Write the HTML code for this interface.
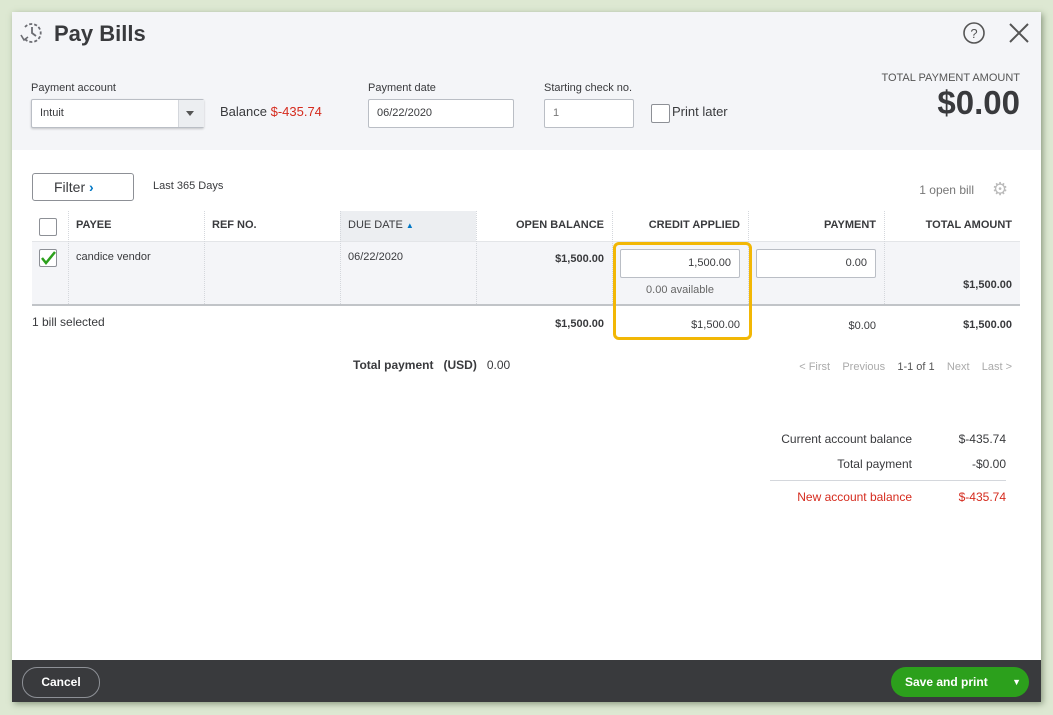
<!DOCTYPE html>
<html><head><style>
body{margin:0;width:1053px;height:715px;background:#dde8d2;font-family:"Liberation Sans",sans-serif;color:#393a3d;position:relative;overflow:hidden}
.a{position:absolute}
#dlg{left:12px;top:12px;width:1029px;height:690px;background:#fff;box-shadow:2px 2px 6px rgba(60,80,50,.5)}
#hdr{left:0;top:0;width:1029px;height:138px;background:#f4f5f8}
.lbl{font-size:11px;color:#393a3d}
.inp{background:#fff;border:1px solid #babec5;border-radius:2px;box-sizing:border-box;font-size:11px;padding:0 8px;line-height:26px;color:#393a3d}
.th{font-size:11px;font-weight:bold;color:#393a3d;top:207px}
.td{font-size:11px}
.r{text-align:right}
</style></head><body>
<div id="dlg" class="a">
<div id="hdr" class="a"></div>
<svg class="a" style="left:7px;top:9px" width="26" height="24" viewBox="0 0 26 24"><path d="M6 6 A9 9 0 1 1 6 18" fill="none" stroke="#6b6c72" stroke-width="1.8" stroke-dasharray="3 2"/><path d="M13 6v6l4 3" fill="none" stroke="#6b6c72" stroke-width="1.8"/><path d="M2 14 l3 5 l4 -3" fill="none" stroke="#6b6c72" stroke-width="1.6"/></svg>
<div class="a" style="left:42px;top:9px;font-size:22px;font-weight:bold;color:#393a3d">Pay Bills</div>
<svg class="a" style="left:950px;top:9px" width="24" height="24"><circle cx="12" cy="12" r="10" fill="none" stroke="#555" stroke-width="1.6"/><text x="12" y="17" text-anchor="middle" font-size="13" font-family="Liberation Sans" fill="#555">?</text></svg>
<svg class="a" style="left:996px;top:10px" width="22" height="22"><path d="M2 2L20 20M20 2L2 20" stroke="#555" stroke-width="2"/></svg>
<div class="a lbl" style="left:19px;top:70px">Payment account</div>
<div class="a inp" style="left:19px;top:87px;width:173px;height:29px;box-shadow:0 1px 2px rgba(0,0,0,.2)">Intuit</div>
<div class="a" style="left:166px;top:88px;width:25px;height:27px;background:#eceef1;border-left:1px solid #d4d7dc"></div>
<div class="a" style="left:174px;top:99px;width:0;height:0;border-left:4px solid transparent;border-right:4px solid transparent;border-top:5px solid #555"></div>
<div class="a" style="left:208px;top:92px;font-size:13px">Balance <span style="color:#d52b1e">$-435.74</span></div>
<div class="a lbl" style="left:356px;top:70px">Payment date</div>
<div class="a inp" style="left:356px;top:87px;width:146px;height:29px">06/22/2020</div>
<div class="a lbl" style="left:532px;top:70px">Starting check no.</div>
<div class="a inp" style="left:532px;top:87px;width:90px;height:29px;color:#777">1</div>
<div class="a" style="left:639px;top:92px;width:17px;height:17px;border:1px solid #8d9096;border-radius:2px;background:#fff"></div>
<div class="a" style="left:660px;top:92px;font-size:13px">Print later</div>
<div class="a" style="left:850px;top:60px;width:158px;font-size:11px;color:#555;text-align:right">TOTAL PAYMENT AMOUNT</div>
<div class="a" style="left:850px;top:72px;width:158px;font-size:33px;font-weight:bold;text-align:right">$0.00</div>

<div class="a" style="left:20px;top:161px;width:102px;height:28px;border:1px solid #8d9096;border-radius:3px;box-sizing:border-box;font-size:14px;line-height:26px;padding-left:21px">Filter <span style="color:#0077c5;font-weight:bold">&#x203A;</span></div>
<div class="a" style="left:141px;top:168px;font-size:11px">Last 365 Days</div>
<div class="a" style="left:880px;top:171px;width:82px;font-size:12px;color:#777;text-align:right">1 open bill</div>
<div class="a" style="left:980px;top:167px;font-size:18px;color:#bbb">&#x2699;</div>

<div class="a" style="left:328px;top:199px;width:136px;height:30px;background:#eceef1"></div>
<div class="a" style="left:20px;top:229px;width:988px;height:63px;background:#f4f5f8;border-top:1px solid #e3e5e8"></div>
<div class="a" style="left:20px;top:292px;width:988px;height:2px;background:#c1c4c8"></div>
<div class="a" style="left:56px;top:199px;width:1px;height:93px;border-left:1px dotted #d4d7dc"></div>
<div class="a" style="left:192px;top:199px;width:1px;height:93px;border-left:1px dotted #d4d7dc"></div>
<div class="a" style="left:328px;top:199px;width:1px;height:93px;border-left:1px dotted #d4d7dc"></div>
<div class="a" style="left:464px;top:199px;width:1px;height:93px;border-left:1px dotted #d4d7dc"></div>
<div class="a" style="left:600px;top:199px;width:1px;height:93px;border-left:1px dotted #d4d7dc"></div>
<div class="a" style="left:736px;top:199px;width:1px;height:93px;border-left:1px dotted #d4d7dc"></div>
<div class="a" style="left:872px;top:199px;width:1px;height:93px;border-left:1px dotted #d4d7dc"></div>
<div class="a" style="left:27px;top:206px;width:16px;height:16px;border:1px solid #8d9096;border-radius:2px;background:#fff"></div>
<div class="a th" style="left:64px">PAYEE</div>
<div class="a th" style="left:200px">REF NO.</div>
<div class="a th" style="left:336px;font-weight:normal">DUE DATE <span style="font-size:8px;color:#0077c5">&#9650;</span></div>
<div class="a th r" style="left:470px;width:122px">OPEN BALANCE</div>
<div class="a th r" style="left:606px;width:122px">CREDIT APPLIED</div>
<div class="a th r" style="left:742px;width:122px">PAYMENT</div>
<div class="a th r" style="left:878px;width:122px">TOTAL AMOUNT</div>
<div class="a" style="left:27px;top:237px;width:16px;height:16px;border:1px solid #8d9096;border-radius:2px;background:#fff"></div>
<svg class="a" style="left:28px;top:237px" width="18" height="18"><path d="M2 9l4 5 9-11" fill="none" stroke="#2ca01c" stroke-width="2.5"/></svg>
<div class="a td" style="left:64px;top:239px">candice vendor</div>
<div class="a td" style="left:336px;top:239px">06/22/2020</div>
<div class="a td r" style="left:470px;top:241px;width:122px;font-weight:bold">$1,500.00</div>
<div class="a inp r" style="left:608px;top:237px;width:120px;height:29px">1,500.00</div>
<div class="a td" style="left:608px;top:272px;width:120px;text-align:center;color:#666">0.00 available</div>
<div class="a inp r" style="left:744px;top:237px;width:120px;height:29px">0.00</div>
<div class="a td r" style="left:878px;top:267px;width:122px;font-weight:bold">$1,500.00</div>
<div class="a" style="left:20px;top:303px;font-size:12px">1 bill selected</div>
<div class="a td r" style="left:470px;top:306px;width:122px;font-weight:bold">$1,500.00</div>
<div class="a td r" style="left:606px;top:307px;width:122px">$1,500.00</div>
<div class="a td r" style="left:742px;top:308px;width:122px">$0.00</div>
<div class="a td r" style="left:878px;top:307px;width:122px;font-weight:bold">$1,500.00</div>
<div class="a" style="left:601px;top:230px;width:133px;height:92px;border:3px solid #f2b705;border-radius:6px"></div>

<div class="a" style="left:341px;top:346px;font-size:12px"><b>Total payment</b> &nbsp; <b>(USD)</b> &nbsp; 0.00</div>
<div class="a" style="left:700px;top:349px;width:300px;text-align:right;font-size:11px;color:#aaa">&lt; First &nbsp;&nbsp; Previous &nbsp;&nbsp; <span style="color:#555">1-1 of 1</span> &nbsp;&nbsp; Next &nbsp;&nbsp; Last &gt;</div>

<div class="a r" style="left:700px;top:420px;width:200px;font-size:12px">Current account balance</div>
<div class="a r" style="left:920px;top:420px;width:74px;font-size:12px">$-435.74</div>
<div class="a r" style="left:700px;top:445px;width:200px;font-size:12px">Total payment</div>
<div class="a r" style="left:920px;top:445px;width:74px;font-size:12px">-$0.00</div>
<div class="a" style="left:758px;top:468px;width:236px;height:1px;background:#d4d7dc"></div>
<div class="a r" style="left:700px;top:478px;width:200px;font-size:12px;color:#d52b1e">New account balance</div>
<div class="a r" style="left:920px;top:478px;width:74px;font-size:12px;color:#d52b1e">$-435.74</div>

<div class="a" style="left:0;top:648px;width:1029px;height:42px;background:#393a3d"></div>
<div class="a" style="left:10px;top:655px;width:76px;height:29px;border:1px solid #8d9096;border-radius:15px;color:#fff;font-size:12px;font-weight:bold;text-align:center;line-height:29px">Cancel</div>
<div class="a" style="left:879px;top:655px;width:138px;height:30px;border-radius:15px;background:#2ca01c;color:#fff;font-size:12px;font-weight:bold;line-height:30px;padding-left:14px;box-sizing:border-box">Save and print <span style="position:absolute;right:8px;font-size:9px">&#9660;</span></div>
</div>
</body></html>
